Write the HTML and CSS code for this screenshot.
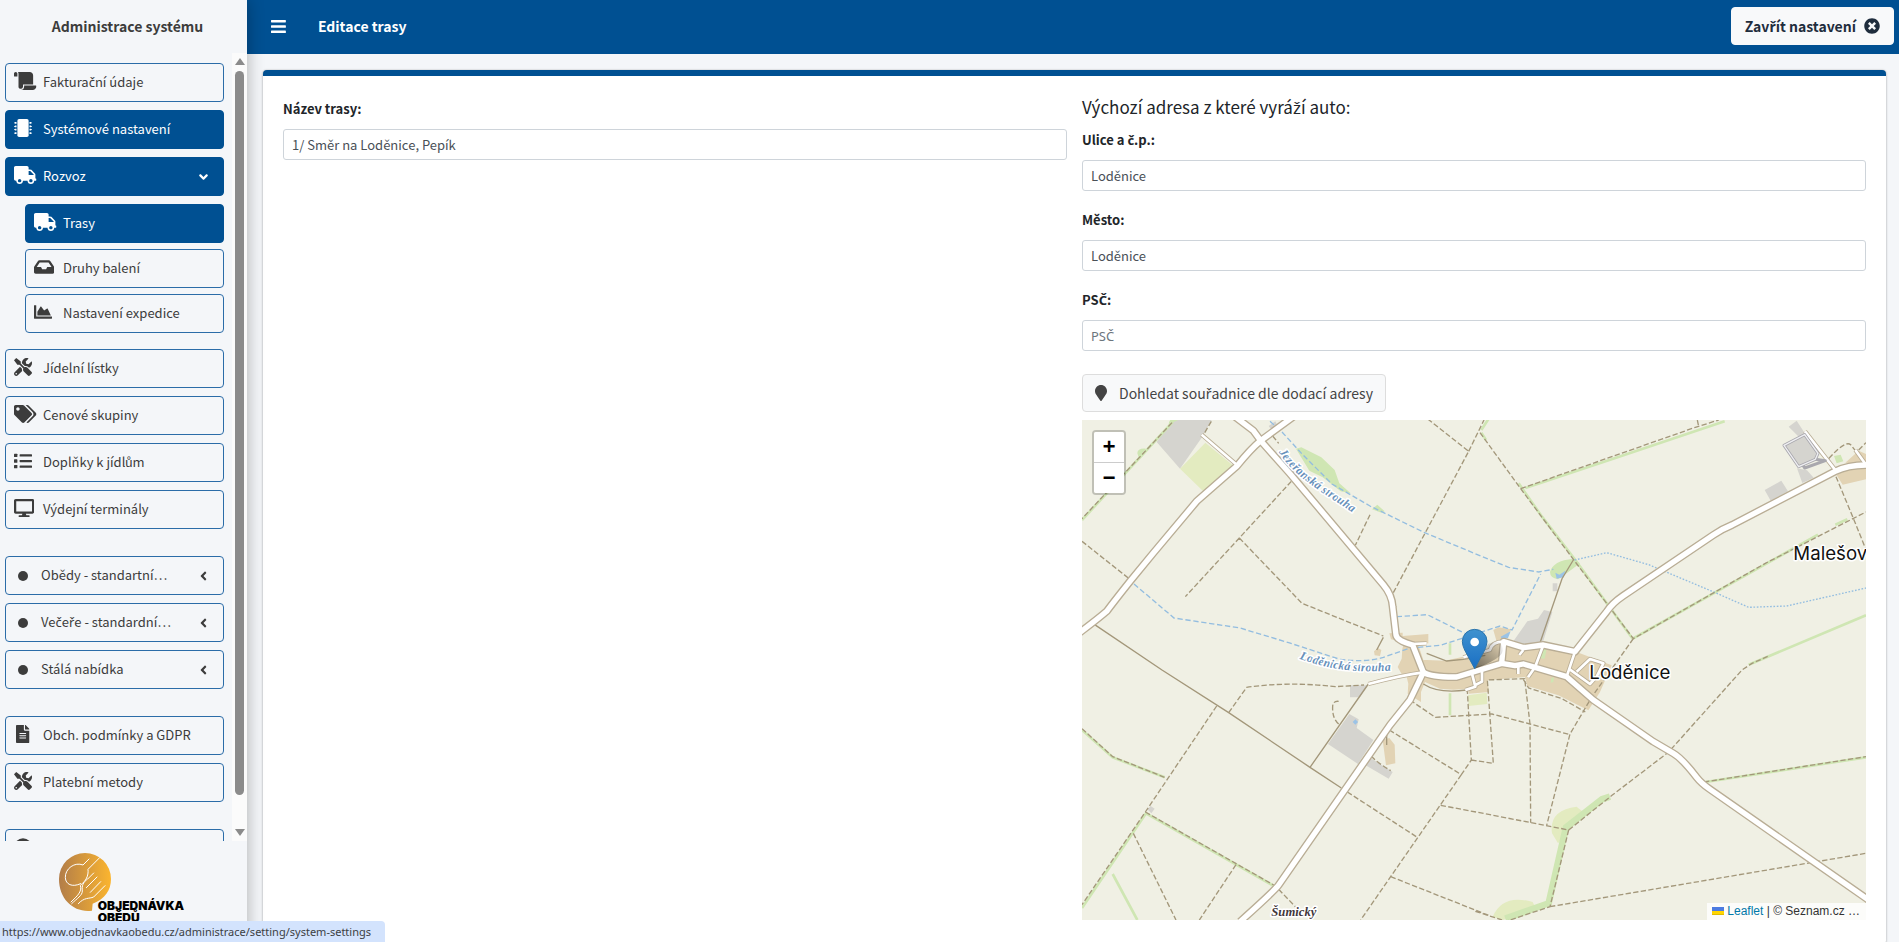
FILE: index.html
```
<!DOCTYPE html>
<html lang="cs">
<head>
    <meta charset="UTF-8">
    <meta name="viewport" content="width=device-width, initial-scale=1">
    <title>Editace trasy</title>
    <link rel="stylesheet" href="styles.css">
</head>
<body>

<!-- Icons -->
<svg class="sprite" aria-hidden="true">
    <symbol id="i-scroll" viewBox="0 0 640 512"><path d="M48 0C21.53 0 0 21.53 0 48v64c0 8.84 7.16 16 16 16h80V48C96 21.53 74.47 0 48 0zm208 412.57V352h288V96c0-52.94-43.06-96-96-96H111.59C121.74 13.41 128 29.92 128 48v368c0 38.87 34.65 69.65 74.75 63.12C234.22 474 256 444.46 256 412.57zM288 384v32c0 52.93-43.06 96-96 96h336c61.86 0 112-50.14 112-112 0-8.84-7.16-16-16-16H288z"/></symbol>
    <symbol id="i-chip" viewBox="0 0 512 512"><rect x="96" width="320" height="512" rx="48"/><path d="M72 88v48H30a6 6 0 0 1-6-6v-6H6a6 6 0 0 1-6-6v-12a6 6 0 0 1 6-6h18v-6a6 6 0 0 1 6-6zM72 184v48H30a6 6 0 0 1-6-6v-6H6a6 6 0 0 1-6-6v-12a6 6 0 0 1 6-6h18v-6a6 6 0 0 1 6-6zM72 280v48H30a6 6 0 0 1-6-6v-6H6a6 6 0 0 1-6-6v-12a6 6 0 0 1 6-6h18v-6a6 6 0 0 1 6-6zM72 376v48H30a6 6 0 0 1-6-6v-6H6a6 6 0 0 1-6-6v-12a6 6 0 0 1 6-6h18v-6a6 6 0 0 1 6-6zM440 88v48h42a6 6 0 0 0 6-6v-6h18a6 6 0 0 0 6-6v-12a6 6 0 0 0-6-6h-18v-6a6 6 0 0 0-6-6zM440 184v48h42a6 6 0 0 0 6-6v-6h18a6 6 0 0 0 6-6v-12a6 6 0 0 0-6-6h-18v-6a6 6 0 0 0-6-6zM440 280v48h42a6 6 0 0 0 6-6v-6h18a6 6 0 0 0 6-6v-12a6 6 0 0 0-6-6h-18v-6a6 6 0 0 0-6-6zM440 376v48h42a6 6 0 0 0 6-6v-6h18a6 6 0 0 0 6-6v-12a6 6 0 0 0-6-6h-18v-6a6 6 0 0 0-6-6z"/></symbol>
    <symbol id="i-truck" viewBox="0 0 640 512"><path d="M624 352h-16V243.9c0-12.7-5.1-24.9-14.1-33.9L494 110.1c-9-9-21.2-14.1-33.9-14.1H416V48c0-26.5-21.5-48-48-48H48C21.5 0 0 21.5 0 48v320c0 26.5 21.5 48 48 48h16c0 53 43 96 96 96s96-43 96-96h128c0 53 43 96 96 96s96-43 96-96h48c8.8 0 16-7.2 16-16v-32c0-8.8-7.2-16-16-16zM160 464c-26.5 0-48-21.5-48-48s21.5-48 48-48 48 21.5 48 48-21.5 48-48 48zm320 0c-26.5 0-48-21.5-48-48s21.5-48 48-48 48 21.5 48 48-21.5 48-48 48zm80-208H416V144h44.1l99.9 99.9V256z"/></symbol>
    <symbol id="i-inbox" viewBox="0 0 576 512"><path d="M567.938 243.908L462.25 85.374A48.003 48.003 0 0 0 422.311 64H153.689a48 48 0 0 0-39.938 21.374L8.062 243.908A47.994 47.994 0 0 0 0 270.533V400c0 26.51 21.49 48 48 48h480c26.51 0 48-21.49 48-48V270.533a47.994 47.994 0 0 0-8.062-26.625zM162.252 128h251.497l85.333 128H376l-32 64H232l-32-64H76.918l85.334-128z"/></symbol>
    <symbol id="i-chart" viewBox="0 0 512 512"><path d="M500 384c6.6 0 12 5.4 12 12v40c0 6.6-5.4 12-12 12H12c-6.6 0-12-5.4-12-12V76c0-6.6 5.4-12 12-12h40c6.6 0 12 5.4 12 12v308h436zM372.7 159.5L288 216l-85.3-113.7c-5.1-6.8-15.5-6.3-19.9 1L96 248v104h384l-89.9-187.8c-3.2-6.5-11.4-8.7-17.4-4.7z"/></symbol>
    <symbol id="i-tools" viewBox="0 0 512 512"><path d="M501.1 395.7L384 278.6c-23.1-23.1-57.6-27.6-85.4-13.9L192 158.1V96L64 0 0 64l96 128h62.1l106.6 106.6c-13.6 27.8-9.2 62.3 13.9 85.4l117.1 117.1c14.6 14.6 38.2 14.6 52.7 0l52.7-52.7c14.5-14.6 14.5-38.2 0-52.7zM331.7 225c28.3 0 54.9 11 74.9 31l19.4 19.4c15.8-6.9 30.8-16.5 43.8-29.5 37.1-37.1 49.7-89.3 37.9-136.7-2.2-9-13.5-12.1-20.1-5.5l-74.4 74.4-67.9-11.3L334 98.9l74.4-74.4c6.6-6.6 3.4-17.9-5.7-20.2-47.4-11.7-99.6.9-136.6 37.9-28.5 28.5-41.9 66.1-41.2 103.6l82.1 82.1c8.1-1.9 16.5-2.9 24.7-2.9zm-103.9 82l-56.7-56.7L18.7 402.8c-25 25-25 65.5 0 90.5s65.5 25 90.5 0l123.6-123.6c-7.6-19.9-9.9-41.6-5-62.7zM64 472c-13.2 0-24-10.8-24-24 0-13.3 10.7-24 24-24s24 10.7 24 24c0 13.2-10.7 24-24 24z"/></symbol>
    <symbol id="i-tags" viewBox="0 0 640 512"><path d="M497.941 225.941L286.059 14.059A48 48 0 0 0 252.118 0H48C21.49 0 0 21.49 0 48v204.118a48 48 0 0 0 14.059 33.941l211.882 211.882c18.744 18.745 49.136 18.746 67.882 0l204.118-204.118c18.745-18.745 18.745-49.137 0-67.882zM112 160c-26.51 0-48-21.49-48-48s21.49-48 48-48 48 21.49 48 48-21.49 48-48 48zm513.941 133.823L421.823 497.941c-18.745 18.745-49.137 18.745-67.882 0l-.36-.36L527.64 323.522c16.999-16.999 26.36-39.6 26.36-63.64s-9.362-46.641-26.36-63.64L331.397 0h48.721a48 48 0 0 1 33.941 14.059l211.882 211.882c18.745 18.745 18.745 49.137 0 67.882z"/></symbol>
    <symbol id="i-list" viewBox="0 0 512 512"><rect y="48" width="96" height="96" rx="16"/><rect y="208" width="96" height="96" rx="16"/><rect y="368" width="96" height="96" rx="16"/><rect x="160" y="64" width="352" height="64" rx="16"/><rect x="160" y="224" width="352" height="64" rx="16"/><rect x="160" y="384" width="352" height="64" rx="16"/></symbol>
    <symbol id="i-desktop" viewBox="0 0 576 512"><path d="M528 0H48C21.5 0 0 21.5 0 48v320c0 26.5 21.5 48 48 48h192l-16 48h-72c-13.3 0-24 10.7-24 24s10.7 24 24 24h272c13.3 0 24-10.7 24-24s-10.7-24-24-24h-72l-16-48h192c26.5 0 48-21.5 48-48V48c0-26.5-21.5-48-48-48zm-16 352H64V64h448v288z"/></symbol>
    <symbol id="i-file" viewBox="0 0 384 512"><path d="M224 136V0H24C10.7 0 0 10.7 0 24v464c0 13.3 10.7 24 24 24h336c13.3 0 24-10.7 24-24V160H248c-13.2 0-24-10.8-24-24zm64 236c0 6.6-5.4 12-12 12H108c-6.6 0-12-5.4-12-12v-8c0-6.6 5.4-12 12-12h168c6.6 0 12 5.4 12 12v8zm0-64c0 6.6-5.4 12-12 12H108c-6.6 0-12-5.4-12-12v-8c0-6.6 5.4-12 12-12h168c6.6 0 12 5.4 12 12v8zm0-72v8c0 6.6-5.4 12-12 12H108c-6.6 0-12-5.4-12-12v-8c0-6.6 5.4-12 12-12h168c6.6 0 12 5.4 12 12zm96-114.1v6.1H256V0h6.1c6.4 0 12.5 2.5 17 7l97.9 98c4.5 4.5 7 10.6 7 16.9z"/></symbol>
    <symbol id="i-angle" viewBox="0 0 256 512"><path d="M31.7 239l136-136c9.4-9.4 24.6-9.4 33.9 0l22.6 22.6c9.4 9.4 9.4 24.6 0 33.9L127.9 256l96.4 96.4c9.4 9.4 9.4 24.6 0 33.9L201.7 409c-9.4 9.4-24.6 9.4-33.9 0l-136-136c-9.5-9.4-9.5-24.6-.1-34z"/></symbol>
    <symbol id="i-close" viewBox="0 0 512 512"><path d="M256 8C119 8 8 119 8 256s111 248 248 248 248-111 248-248S393 8 256 8zm121.6 313.1c4.7 4.7 4.7 12.3 0 17L338 377.6c-4.7 4.7-12.3 4.7-17 0L256 312l-65.1 65.6c-4.7 4.7-12.3 4.7-17 0L134.4 338c-4.7-4.7-4.7-12.3 0-17l65.6-65-65.6-65.1c-4.7-4.7-4.7-12.3 0-17l39.6-39.6c4.7-4.7 12.3-4.7 17 0l65 65.7 65.1-65.6c4.7-4.7 12.3-4.7 17 0l39.6 39.6c4.7 4.7 4.7 12.3 0 17L312 256l65.6 65.1z"/></symbol>
    <symbol id="i-marker" viewBox="0 0 384 512"><path d="M172.268 501.67C26.97 291.031 0 269.413 0 192 0 85.961 85.961 0 192 0s192 85.961 192 192c0 77.413-26.97 99.031-172.268 309.67-9.535 13.774-29.93 13.773-39.464 0z"/></symbol>
    <symbol id="i-bars" viewBox="0 0 448 512"><path d="M16 132h416c8.837 0 16-7.163 16-16V76c0-8.837-7.163-16-16-16H16C7.163 60 0 67.163 0 76v40c0 8.837 7.163 16 16 16zm0 160h416c8.837 0 16-7.163 16-16v-40c0-8.837-7.163-16-16-16H16c-8.837 0-16 7.163-16 16v40c0 8.837 7.163 16 16 16zm0 160h416c8.837 0 16-7.163 16-16v-40c0-8.837-7.163-16-16-16H16c-8.837 0-16 7.163-16 16v40c0 8.837 7.163 16 16 16z"/></symbol>
</svg>

<div class="wrapper">
    <aside class="sidebar">
        <div class="brand">Administrace systému</div>
        <div class="sidebar-body">
            <nav class="nav">
                <a class="nav-link" href="#"><span class="nav-icon"><svg viewBox="0 0 640 512"><use href="#i-scroll"/></svg></span><span>Faktura<span class="caron">č</span>ní údaje</span></a>
                <a class="nav-link active" href="#"><span class="nav-icon"><svg viewBox="0 0 512 512"><use href="#i-chip"/></svg></span>Systémové nastavení</a>
                <a class="nav-link active" href="#"><span class="nav-icon"><svg viewBox="0 0 640 512"><use href="#i-truck"/></svg></span>Rozvoz<svg class="angle angle-open" viewBox="0 0 256 512"><use href="#i-angle"/></svg></a>
                <div class="nav-sub">
                    <a class="nav-link active" href="#"><span class="nav-icon"><svg viewBox="0 0 640 512"><use href="#i-truck"/></svg></span>Trasy</a>
                    <a class="nav-link" href="#"><span class="nav-icon"><svg viewBox="0 0 576 512"><use href="#i-inbox"/></svg></span>Druhy balení</a>
                    <a class="nav-link" href="#"><span class="nav-icon"><svg viewBox="0 0 512 512"><use href="#i-chart"/></svg></span>Nastavení expedice</a>
                </div>
                <a class="nav-link" href="#"><span class="nav-icon"><svg viewBox="0 0 512 512"><use href="#i-tools"/></svg></span>Jídelní lístky</a>
                <a class="nav-link" href="#"><span class="nav-icon"><svg viewBox="0 0 640 512"><use href="#i-tags"/></svg></span>Cenové skupiny</a>
                <a class="nav-link" href="#"><span class="nav-icon"><svg viewBox="0 0 512 512"><use href="#i-list"/></svg></span>Doplňky k jídlům</a>
                <a class="nav-link" href="#"><span class="nav-icon"><svg viewBox="0 0 576 512"><use href="#i-desktop"/></svg></span>Výdejní terminály</a>

                <a class="nav-link nav-group" href="#"><span class="dot"></span>Obědy - standartní…<svg class="angle" viewBox="0 0 256 512"><use href="#i-angle"/></svg></a>
                <a class="nav-link" href="#"><span class="dot"></span><span>Ve<span class="caron">č</span>e<span class="caron">ř</span>e - standardní…</span><svg class="angle" viewBox="0 0 256 512"><use href="#i-angle"/></svg></a>
                <a class="nav-link" href="#"><span class="dot"></span>Stálá nabídka<svg class="angle" viewBox="0 0 256 512"><use href="#i-angle"/></svg></a>

                <a class="nav-link nav-group" href="#"><span class="nav-icon narrow"><svg viewBox="0 0 384 512"><use href="#i-file"/></svg></span>Obch. podmínky a GDPR</a>
                <a class="nav-link" href="#"><span class="nav-icon"><svg viewBox="0 0 512 512"><use href="#i-tools"/></svg></span>Platební metody</a>

                <a class="nav-link nav-group" href="#" aria-label="Nápověda"><span class="nav-icon"><svg viewBox="0 0 512 512"><circle cx="256" cy="256" r="248"/></svg></span></a>
            </nav>
            <div class="scrollbar">
                <span class="arrow-up"></span>
                <span class="thumb"></span>
                <span class="arrow-down"></span>
            </div>
        </div>
        <div class="sidebar-footer">
            <svg class="logo" viewBox="0 0 390 240" role="img" aria-label="Objednávka obědů">
                <defs>
                    <linearGradient id="gold"><stop offset="0" stop-color="#b27d49"/><stop offset="1" stop-color="#fbb52f"/></linearGradient>
                </defs>
                <path fill="url(#gold)" d="M78 0a78 78 0 0 1 78 78c0 34-18 60-55 74l-2 21C45 180 0 140 0 78A78 78 0 0 1 78 0z"/>
                <g fill="none" stroke="#fff" stroke-width="3" stroke-linecap="round" stroke-linejoin="round">
                    <path d="M90 18L72 36C48 26 18 46 19 74c1 20 20 30 46 18M122 14L87 49c2 20-6 34-23 48 6 20-10 32-28 50M104 60L86 78c-14 10-18 20-16 36 0 14-16 22-32 38M114 72L82 104M125 86L94 118M138 98l-34 34c-14 6-28 0-46 20"/>
                </g>
                <text class="logo-text" x="116" y="171">OBJEDNÁVKA</text>
                <text class="logo-text" x="116" y="208">OBĚDŮ</text>
            </svg>
        </div>
    </aside>

    <div class="content">
        <header class="topbar">
            <button type="button" class="btn-menu" aria-label="Menu"><svg viewBox="0 0 448 512"><use href="#i-bars"/></svg></button>
            <h1>Editace trasy</h1>
            <button type="button" class="btn-close"><span>Zav<span class="caron">ř</span>ít nastavení</span><svg viewBox="0 0 512 512"><use href="#i-close"/></svg></button>
        </header>

        <main class="card">
            <div class="col">
                <div class="form-group first">
                    <label for="name">Název trasy:</label>
                    <input type="text" id="name" value="1/ Směr na Loděnice, Pepík">
                </div>
            </div>
            <div class="col">
                <h2>Výchozí adresa z které vyrá<span class="caron">ž</span>í auto:</h2>
                <div class="form-group">
                    <label for="street">Ulice a <span class="caron">č</span>.p.:</label>
                    <input type="text" id="street" value="Loděnice">
                </div>
                <div class="form-group">
                    <label for="city">Město:</label>
                    <input type="text" id="city" value="Loděnice">
                </div>
                <div class="form-group">
                    <label for="zip">PS<span class="caron">Č</span>:</label>
                    <input type="text" id="zip" placeholder="PSČ">
                </div>
                <button type="button" class="btn-locate"><svg viewBox="0 0 384 512"><use href="#i-marker"/></svg><span>Dohledat sou<span class="caron">ř</span>adnice dle dodací adresy</span></button>

                <div class="map">
                    <svg class="map-canvas" viewBox="0 0 2352 1500" preserveAspectRatio="xMidYMid slice">
                        <defs>
                            <linearGradient id="pin" x2="0" y2="1"><stop offset="0" stop-color="#3f92cf"/><stop offset="1" stop-color="#1a6fc4"/></linearGradient>
                            <linearGradient id="shade" x1="0" y1="1" x2="1" y2="0"><stop offset="0" stop-opacity=".5"/><stop offset="1" stop-opacity="0"/></linearGradient>
                            <path id="stream1" d="M590 96C640 175 720 215 830 290"/>
                            <path id="stream2" d="M652 716C750 752 840 762 960 748"/>
                            <g id="roads-main">
                                <path d="M634-10L536 62Q505 88 464 139L344 244 214 399 144 484Q90 552 74 574 50 595-10 640"/>
                                <path d="M459-10L514 32 536 62 624 161 904 494Q930 525 932 560L942 645Q945 662 992 675L1024 757 984 840 924 915 590 1395Q580 1410 474 1505"/>
                                <path d="M1024 757Q1050 772 1124 771L1259 730 1299 737 1324 732 1359 742 1454 770 1534 840 1714 965 1774 1000Q1800 1015 1844 1072 1858 1090 1884 1108L2360 1440"/>
                                <path d="M1259 730L1265 665 1324 683 1384 675 1479 695 1574 575Q1590 550 1624 527L1894 345Q1920 327 1950 315L2259 154Q2300 134 2360 135"/>
                            </g>
                            <g id="roads-small">
                                <path d="M1024 757Q960 765 859 792M992 672L1034 670M359 44L464 134M2169 34L2259 149M1384 675L1359 742 1338 772M1479 695L1454 770M1459 745L1524 792 1544 770M1484 755L1524 717 1564 730 1544 770M1265 665Q1230 665 1224 690L1144 712M1309 737V762M1324 690L1312 705M1169 757L1180 800 1150 810M1200 752V785L1180 795M2320 90L2352 134"/>
                            </g>
                        </defs>

                        <!-- Areas -->
                        <g fill="#d5d4cf">
                            <path d="M275-6H392L360 52 294 146 224 66zM560 18l20-14 8 16-16 14zM804 796h52l-22 36h-30zM802 882l28 16-6 26 50 36-46 72-90-60zM860 1010l72 46-12 20-82-48zM1294 664l42-60 32-8 18-26 25 6-28 90-30 16zM2048 210l50-28 20 32-52 28zM2120 20l24-18 26 40-16 12zM2145 145l30 6 20 22-34 16zM1412 490h14v24h-14zM196 1168l10-10 12 8-10 14z"/>
                        </g>
                        <path fill="#e2d3b4" d="M922 640l40-2v10l77-6v28l-30 5 15 45 10 0 55 2 65-14 65-18 25-25-10-35 15-8 40 6-25 30 100 28 15-10 105 20 105 40-35 80-35 55-90-45-93-28-7-27-112 10 4 35-60 5-4-15-43 3-40-3-45-20-12 30v30l-40-25 2-30-5-20-13-5-14-25 12-25 2-30 6-20-40-8zM876 694l12-10 10 6-4 18-16-2zM902 960l20-6 16 20 2 56-28 6zM2264 166q30-28 88-28v40l-70 16zM2290 128l40-36 22 10v30z"/>
                        <path fill="#e3ebc0" d="M294 146l76-78 88 72-92 76zM1158 826l56-8 2 34-56 6zM1410 1240q-10-70 74-80l24 20-80 90zM1232 1490q30-70 120-44l10 20-100 34z"/>
                        <path fill="#cfe6b3" d="M642 86l16-4 60 30 40 38 14 40 34 30-30-6-54-42-40-20zM870 268l16-14 22 20-10 4zM1404 456q8-34 70-40l20 14-46 34-20 14q-24-4-24-22zM166 100q0-16 26-14l-22 26zM260 14q0-18 20-20l8 6zM2256 108l20-4 8 20-20 6zM1376 688l18-2-6 30-18-2zM1408 774l8-2-2 14-8 2z"/>
                        <path fill="#9bc3e6" d="M812 906l8-8 8 8-8 8zM1420 458l12 6 18-12-6 20-20 4zM1256 650l30-16-8 20-18 4z"/>

                        <!-- Tree lines -->
                        <g class="trees">
                            <path d="M272 6L0 300M1198 38L1212 60M1310 190L1380 290 1480 420 1652 656 2208 344M1330 204L1600 114 1928 4M2260 314l36-16M2000 734L2352 586M0 930L92 1012 248 1072M0 1464L192 1180 576 1398M92 1362L166 1500M1870 1086L2352 1012M1104 670v34M1104 820v66M1198 30L1220-4"/>
                            <path class="thick" d="M1584 1130L1560 1138 1452 1222 1400 1450 1270 1496"/>
                        </g>

                        <!-- Water -->
                        <g class="water">
                            <path d="M564 4L600 36 662 104 750 192 864 258 1028 338 1230 422 1280 442 1370 456 1414 448M156 492L276 594 474 624 620 668 774 718Q850 728 904 712L984 684 1074 676 1144 654 1254 618 1290 630 1376 462M944 590L1036 584 1148 640"/>
                            <path class="dotted" d="M1478 420L1574 398 1700 434 1900 518 2000 562 2114 558 2352 504"/>
                        </g>

                        <!-- Field tracks -->
                        <g class="track-solid">
                            <path d="M38 614L240 750 440 878 684 1042 778 1104M859 792L684 1042M1474 420L1440 476 1370 680M914 940V975M904 652L884 690"/>
                            <path d="M1034 700L1094 723 1144 718 1210 706M1024 792Q1070 822 1154 810"/>
                        </g>
                        <g class="tracks">
                            <path d="M270 8L0 296M388 4L360 52M0 364L144 478M628 184L472 354 310 530M472 354L660 550 904 648M864 284L820 376M934 518L1160 94 1036-4M1160 94L1206 0M572 48L590 70"/>
                            <path d="M1194 38L1316 206 1480 426 1654 656 2050 430 2352 276M1316 206L1840 22 1910 0M1846 0L1850 20M1654 656L1530 830 1464 942 1394 1216M2262 170L2312 290 2350 384M2240 116Q2290 60 2306 74L2320 92M2330 90L2352 68"/>
                            <path d="M0 926L92 1010 248 1072M404 858L190 1176 0 1454M440 878L494 802Q620 784 760 800L846 795M190 1176L575 1395M154 1240L282 1500M462 1334L352 1500M590 1408L640 1460M770 912Q750 895 752 858 754 842 770 844M984 840L1060 892 1230 882 1344 912 1464 944M922 930L1138 1064 1168 1020 1156 812M1138 1064L926 1370 836 1500M796 1116L1006 1252M926 1370L1220 1486M1076 1156L1224 1184 1460 1230 1404 1460 1194 1530M1168 1020L1234 1030 1216 780 1328 776 1344 912 1346 1208M1324 778L1340 804 1440 836 1510 876M1180 1474L1260 1500M1460 1230L1590 1126 1760 996 1980 750 2010 730 2060 708M1404 1460L2352 1300M1866 1086L2352 1010M868 1008Q880 1024 926 1052"/>
                        </g>

                        <!-- Roads -->
                        <use href="#roads-small" class="small-casing"/>
                        <use href="#roads-main" class="main-casing"/>
                        <use href="#roads-small" class="small-fill"/>
                        <use href="#roads-main" class="main-fill"/>

                        <!-- Farm in the north-east corner -->
                        <g fill="#d5d4cf" stroke="#a9a8ae" stroke-width="9" stroke-linejoin="round">
                            <path d="M2106 76L2168 44 2208 100 2200 118 2150 140z"/>
                            <path fill="none" d="M2200 118L2230 122 2168 144 2162 134"/>
                        </g>
                        <path d="M2106 76L2168 44 2208 100 2200 118 2150 140z" fill="none" stroke="#efeff2" stroke-width="4"/>

                        <!-- Labels -->
                        <text class="lbl-water"><textPath href="#stream1">Jezeřanská strouha</textPath></text>
                        <text class="lbl-water"><textPath href="#stream2">Loděnická strouha</textPath></text>
                        <text class="lbl-town" x="1522" y="777">Loděnice</text>
                        <text class="lbl-town" x="2134" y="420">Malešov</text>
                        <text class="lbl-field" x="568" y="1487">Šumický</text>

                        <!-- Marker -->
                        <path fill="url(#shade)" d="M1178 746L1218 672Q1262 650 1262 692 1260 716 1178 746z"/>
                        <path fill="url(#pin)" stroke="#2b74ab" stroke-width="3" d="M1178 746L1148 690Q1141 676 1141 664A37 36 0 0 1 1215 664Q1215 676 1208 690z"/>
                        <circle cx="1178" cy="666" r="13" fill="#fff"/>
                    </svg>
                    <div class="zoom">
                        <button type="button" aria-label="Přiblížit">+</button>
                        <button type="button" aria-label="Oddálit">−</button>
                    </div>
                    <div class="attribution">
                        <svg viewBox="0 0 12 8"><path fill="#4c7be1" d="M0 0h12v4H0z"/><path fill="#ffd500" d="M0 4h12v3H0z"/><path fill="#e0bc00" d="M0 7h12v1H0z"/></svg>
                        <a href="#">Leaflet</a> | © Seznam.cz …
                    </div>
                </div>
            </div>
        </main>
    </div>
</div>

<div class="status">https://www.objednavkaobedu.cz/administrace/setting/system-settings</div>

</body>
</html>
```
FILE: styles.css
```
* { box-sizing: border-box; }
body { margin: 0; font-family: "Source Sans Pro", "Noto Sans CJK SC", sans-serif; font-size: 14px; line-height: 20px; color: #212529; background: #f4f6f9; overflow: hidden; }
button, input { font-family: inherit; }
svg { fill: currentColor; }
.sprite { display: none; }
.caron { font-family: "Noto Sans", sans-serif; line-height: 1; }

.wrapper { display: flex; height: 100vh; }

/* sidebar */
.sidebar { flex: none; width: 247px; display: flex; flex-direction: column; background: #f4f6f9; box-shadow: 0 0 16px rgba(0,0,0,.3); z-index: 2; }
.brand { flex: none; height: 53px; padding: 0 0 0 8px; line-height: 53px; text-align: center; font-weight: bold; color: #3c3c3c; }
.sidebar-body { flex: 1; min-height: 0; display: flex; overflow: hidden; }
.nav { flex: 1; display: flex; flex-direction: column; gap: 8px; padding: 10px 8px 0 5px; }
.nav-link { flex: none; display: flex; height: 39px; padding: 8px 16px 0 8px; border: 1px solid #2b6ca8; border-radius: 4px; font-size: 13px; color: #3c3c3c; text-decoration: none; white-space: nowrap; }
.nav-link.active { background: #005092; border-color: #005092; color: #fff; }
.nav-icon { flex: none; width: 29px; }
.nav-icon svg { display: block; height: 18px; }
.nav-icon.narrow { padding-left: 2px; }
.nav-sub { display: flex; flex-direction: column; gap: 6px; padding: 0 0 8px 20px; }
.nav-group { margin-top: 19px; }
.dot { flex: none; width: 10px; height: 10px; margin: 6px 13px 0 4px; border-radius: 50%; background: #3c3c3c; }
.angle { height: 14px; margin: 4px 0 0 auto; }
.angle-open { transform: rotate(-90deg); }

.scrollbar { flex: none; width: 15px; display: flex; flex-direction: column; align-items: center; padding: 5px 0; background: #fbfbfb; }
.thumb { width: 9px; flex: none; height: 93%; margin: 6px 0 auto; border-radius: 5px; background: #8b8b8b; }
.arrow-up { border: 5px solid transparent; border-top: 0; border-bottom: 7px solid #8b8b8b; }
.arrow-down { border: 5px solid transparent; border-bottom: 0; border-top: 7px solid #8b8b8b; }

.sidebar-footer { flex: none; height: 101px; padding: 12px 0 0 59px; }
.logo { display: block; width: 130px; }
.logo-text { font-family: Inter, sans-serif; font-size: 36px; font-weight: 900; fill: #000; }

/* header */
.content { flex: 1; min-width: 0; display: flex; flex-direction: column; }
.topbar { flex: none; display: flex; align-items: center; height: 54px; padding: 0 5px 2px 24px; background: #005092; color: #fff; }
.topbar h1 { margin: 0 auto 0 32px; font-size: 14px; }
.btn-menu { padding: 0; border: 0; background: none; color: #fff; cursor: pointer; }
.btn-menu svg { display: block; height: 17px; }
.btn-close { display: flex; align-items: center; gap: 8px; height: 38px; padding: 0 13px; border: 1px solid #f8f9fa; border-radius: 4px; background: #f8f9fa; color: #1f2d3d; font-size: 14px; font-weight: bold; cursor: pointer; }
.btn-close svg { height: 16px; }

/* form */
.card { flex: 1 0 auto; display: grid; grid-template-columns: 1fr 1fr; gap: 15px; margin: 16px 13px 0 16px; padding: 20px 20px 24px; background: #fff; border-top: 6px solid #005092; border-radius: 4px; box-shadow: 0 0 2px rgba(0,0,0,.2), 0 1px 3px rgba(0,0,0,.2); }
.col { min-width: 0; }
.col h2 { margin: 0 0 12px; font-size: 17px; font-weight: normal; line-height: 22px; }
.form-group { margin-bottom: 19px; }
.form-group.first { padding-top: 3px; }
label { display: block; margin-bottom: 10px; font-size: 13px; font-weight: bold; }
input { display: block; width: 100%; height: 31px; padding: 0 8px 1px; border: 1px solid #ced4da; border-radius: 3px; font-size: 13px; color: #495057; background: #fff; }
input::placeholder { font-family: "Noto Sans", sans-serif; color: #6c757d; }
.btn-locate { display: flex; align-items: center; gap: 12px; height: 38px; margin: 23px 0 8px; padding: 0 12px; border: 1px solid #ddd; border-radius: 4px; background: #f8f9fa; color: #444; font-size: 14px; cursor: pointer; }
.btn-locate svg { height: 16px; }

/* map */
.map { position: relative; height: 500px; overflow: hidden; background: #f0f0e4; }
.map-canvas { display: block; width: 100%; height: 100%; fill: #000; }
.trees { fill: none; stroke: #cfe6b3; stroke-width: 8; }
.trees .thick { stroke-width: 20; }
.water { fill: none; stroke: #93bde0; stroke-width: 4; stroke-dasharray: 16 8; }
.water .dotted { stroke-dasharray: 5 5; }
.tracks { fill: none; stroke: #a3977a; stroke-width: 4; stroke-dasharray: 16 7; }
.track-solid { fill: none; stroke: #a3977a; stroke-width: 4; }
.main-casing, .small-casing, .main-fill, .small-fill { fill: none; stroke-linejoin: round; }
.main-casing { stroke: #b9ad95; stroke-width: 24; }
.main-fill { stroke: #fff; stroke-width: 16; }
.small-casing { stroke: #b9ad95; stroke-width: 13; }
.small-fill { stroke: #fff; stroke-width: 8; }
.lbl-water, .lbl-town, .lbl-field { paint-order: stroke; stroke: #fff; stroke-width: 9; stroke-linejoin: round; }
.lbl-water { font: italic bold 36px "Liberation Serif", serif; fill: #6790ba; }
.lbl-town { font: 56px Inter, sans-serif; fill: #111; }
.lbl-field { font: italic bold 38px "Liberation Serif", serif; fill: #43373b; }

.zoom { position: absolute; top: 10px; left: 10px; display: flex; flex-direction: column; border: 2px solid rgba(0,0,0,.2); border-radius: 4px; background-clip: padding-box; }
.zoom button { width: 30px; height: 30px; padding: 3px 0 0; border: 0; background: #fff; color: #000; font: bold 22px/26px "Liberation Mono", monospace; cursor: pointer; }
.zoom button:first-child { height: 31px; border-bottom: 1px solid #ccc; border-radius: 2px 2px 0 0; }
.zoom button:last-child { border-radius: 0 0 2px 2px; }
.attribution { position: absolute; right: 0; bottom: 0; padding: 0 6px 0 5px; background: rgba(255,255,255,.8); color: #333; font: 12px/17px "Liberation Sans", sans-serif; }
.attribution svg { width: 12px; height: 8px; }
.attribution a { color: #0078a8; text-decoration: none; }

/* link preview */
.status { position: fixed; left: 0; bottom: 0; z-index: 5; height: 21px; padding: 0 14px 0 2px; border-top-right-radius: 4px; background: #d3e3fd; color: #3c4043; font: 11px/22px "Noto Sans", sans-serif; }
```
